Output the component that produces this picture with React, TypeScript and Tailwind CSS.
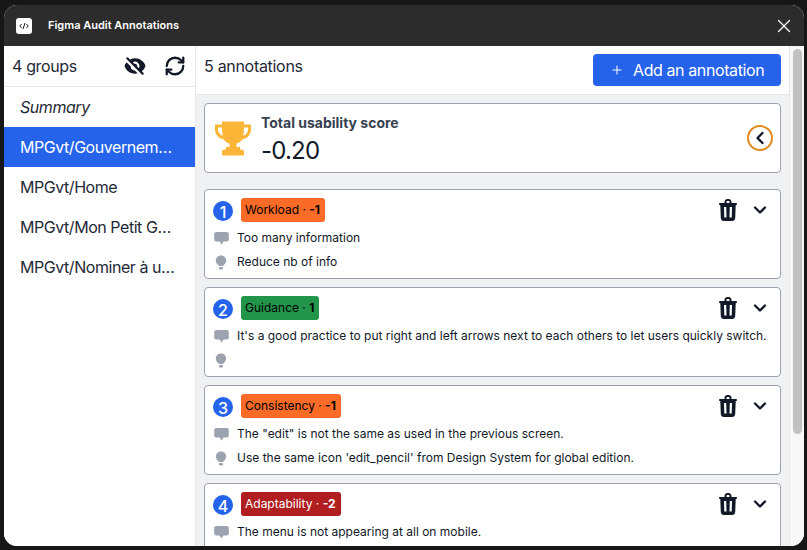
import React from "react";
import { X, Plus, ChevronLeft, ChevronDown, RefreshCw } from "lucide-react";
import { HiEyeOff } from "react-icons/hi";

const Trophy = () => (
  <svg width="36" height="36" viewBox="0 0 36 36" fill="#fbb637">
    <path fillRule="evenodd" d="M7 1.500h22v3h7v5c0 5-3.700 9-8.500 9.800-1.500 2.300-3.500 3.700-6 4.200v3.500h-7v-3.500c-2.500-.5-4.500-1.900-6-4.200C3.700 18.500 0 14.500 0 9.500v-5h7v-3zM3 7.500v2c0 2.800 1.700 5.200 4.900 6.300C7.300 13.500 7 10.500 7 7.500H3zm30 0h-4c0 3-.3 6-.9 8.300 3.200-1.100 4.900-3.500 4.900-6.300v-2z" />
    <path d="M11 27h14v2.500h1.500c1.500 0 2.500 1 2.500 2.500v3.500H7V32c0-1.500 1-2.500 2.500-2.500H11V27z" />
  </svg>
);

const Trash = () => (
  <svg width="18" height="22" viewBox="0 0 18 22" fill="#111827">
    <path fillRule="evenodd" d="M5.500 4V3C5.500 1.200 6.800 0 8.500 0h1c1.700 0 3 1.200 3 3v1h4.500c.6 0 1 .4 1 1.100s-.4 1.100-1 1.100h-.3L16.200 19c-.1 1.700-1.400 3-3.100 3H4.900c-1.700 0-3-1.300-3.100-3L1.300 6.200H1c-.6 0-1-.4-1-1.100S.4 4 1 4h4.500zm2 0h3V3c0-.6-.4-1-1-1h-1c-.6 0-1 .4-1 1v1zM5 8l.3 10.500h2.200L7.200 8H5zm5.800 0-.3 10.500h2.200L13 8h-2.200z" />
  </svg>
);

const Comment = () => (
  <svg width="15" height="13" viewBox="0 0 15 13" fill="#9ca3af">
    <path d="M2.300 0h10.400c1.200 0 2.100.9 2.100 2v5.500c0 1.100-.9 2-2.100 2H9.500L7.500 12.500l-2-3H2.300c-1.200 0-2.100-.9-2.100-2V2C.2.900 1.100 0 2.300 0z" />
  </svg>
);

const Bulb = () => (
  <svg width="14" height="15" viewBox="0 0 14 15" fill="#9ca3af">
    <path d="M7 .5c3 0 5.200 2.200 5.200 5 0 1.900-1 3.200-2.200 4.200-.5.400-.7.800-.7 1.300H4.700c0-.5-.2-.9-.7-1.300C2.800 8.700 1.800 7.400 1.800 5.500c0-2.800 2.200-5 5.200-5z" />
    <rect x="5" y="12" width="4" height="2.500" rx="1" />
  </svg>
);

type Item = { n: number; label: string; score: string; color: string; text: string; comment: string; tip: string };

const items: Item[] = [
  { n: 1, label: "Workload", score: "-1", color: "bg-[#f96b26]", text: "text-black", comment: "Too many information", tip: "Reduce nb of info" },
  { n: 2, label: "Guidance", score: "1", color: "bg-[#22954a]", text: "text-black", comment: "It's a good practice to put right and left arrows next to each others to let users quickly switch.", tip: "" },
  { n: 3, label: "Consistency", score: "-1", color: "bg-[#f96b26]", text: "text-black", comment: 'The "edit" is not the same as used in the previous screen.', tip: "Use the same icon 'edit_pencil' from Design System for global edition." },
  { n: 4, label: "Adaptability", score: "-2", color: "bg-[#b01e20]", text: "text-white", comment: "The menu is not appearing at all on mobile.", tip: "" },
];

const Card = ({ item }: { item: Item }) => (
  <div className="bg-white border border-[#9ca3af] rounded-[4px] h-[90px] shrink-0 pl-2 pr-[10px] pt-2 flex flex-col">
    <div className="flex items-center h-6">
      <div className="w-5 h-5 rounded-full bg-[#2563eb] text-white text-[16px] font-medium leading-[22px] text-center mt-[2px] overflow-hidden">{item.n}</div>
      <div className={`ml-[8px] h-6 rounded-[3px] pl-[4px] pr-[5px] text-[12px] leading-6 ${item.color} ${item.text}`}>
        {item.label} · <span className="font-bold">{item.score}</span>
      </div>
      <div className="ml-auto flex items-center gap-[13px]">
        <Trash />
        <ChevronDown size={20} strokeWidth={2.800} color="#111827" />
      </div>
    </div>
    <div className="flex items-center h-6 mt-[4px] text-[12px] text-[#111827] whitespace-nowrap">
      <span className="w-[16px] mr-[8px] flex justify-center"><Comment /></span>
      {item.comment}
    </div>
    <div className="flex items-center h-6 text-[12px] text-[#111827] whitespace-nowrap">
      <span className="w-[16px] mr-[8px] flex justify-center"><Bulb /></span>
      {item.tip}
    </div>
  </div>
);

export default function App() {
  const groups = ["Summary", "MPGvt/Gouvernem…", "MPGvt/Home", "MPGvt/Mon Petit G…", "MPGvt/Nominer à u…"];
  return (
    <div className="w-[807px] h-[550px] bg-[#171717] pt-[5px] pl-[4px] pr-[3px] pb-[4px] overflow-hidden" style={{ fontFamily: "Inter, 'Liberation Sans', sans-serif" }}>
      <div className="w-full h-full rounded-[13px] overflow-hidden flex flex-col bg-white">
        <div className="h-[41px] shrink-0 bg-[#2c2c2c] flex items-center pl-[12px] pr-[9px]">
          <div className="w-4 h-4 rounded-[3px] bg-white flex items-center justify-center">
            <svg width="10" height="8" viewBox="0 0 10 8" fill="none" stroke="#222" strokeWidth="1">
              <path d="M2.500 2 .8 4l1.700 2M7.500 2l1.700 2-1.700 2M6 1 4 7" />
            </svg>
          </div>
          <span className="ml-[16px] text-white text-[11px] font-semibold">Figma Audit Annotations</span>
          <X size={22} color="#fff" strokeWidth={1.300} className="ml-auto" />
        </div>
        <div className="flex-1 flex min-h-0">
          <div className="w-[192px] shrink-0 border-r border-[#e5e7eb] bg-white">
            <div className="h-[41px] border-b border-[#e5e7eb] flex items-center pl-2 pr-[9px] text-[#1f2937] text-[16px] tracking-[-0.35px]">
              <span>4 groups</span>
              <span className="ml-auto flex items-center gap-[18px]">
                <HiEyeOff size={22} color="#111827" />
                <RefreshCw size={22} strokeWidth={2.500} color="#111827" />
              </span>
            </div>
            {groups.map((g, i) => (
              <div key={g} className={`h-10 px-4 flex items-center whitespace-nowrap text-[16px] tracking-[-0.45px] ${i === 1 ? "bg-[#2563eb] text-white" : "text-[#1f2937]"} ${i === 0 ? "italic" : ""}`}>{g}</div>
            ))}
          </div>
          <div className="flex-1 min-w-0 flex flex-col bg-[#f0f1f3]">
            <div className="h-[49px] shrink-0 bg-white border-b border-[#e5e7eb] flex px-2 pt-2">
              <span className="text-[#1f2937] text-[16px] leading-6 tracking-[-0.3px]">5 annotations</span>
              <button className="ml-auto h-8 w-[188px] rounded-[4px] bg-[#2563eb] text-white text-[16px] tracking-[-0.4px] flex items-center pl-[17px]">
                <Plus size={14} strokeWidth={1.800} />
                <span className="ml-[9px]">Add an annotation</span>
              </button>
            </div>
            <div className="flex-1 min-h-0 overflow-hidden px-2 pt-2 flex flex-col">
              <div className="bg-white border border-[#9ca3af] rounded-[4px] h-[70px] shrink-0 flex items-center pl-[10px] pr-[7px]">
                <Trophy />
                <div className="ml-[10px] mt-[3px]">
                  <div className="text-[14px] leading-5 font-bold text-[#374151]">Total usability score</div>
                  <div className="text-[24px] leading-8 mt-[2px] tracking-[-0.8px] text-[#111827]">-0.20</div>
                </div>
                <div className="ml-auto w-[26px] h-[26px] rounded-full border-2 border-[#e08a1e] flex items-center justify-center">
                  <ChevronLeft size={20} strokeWidth={2.800} color="#111827" />
                </div>
              </div>
              <div className="mt-[16px] flex flex-col gap-[8px]">
                {items.map((it) => <Card key={it.n} item={it} />)}
              </div>
            </div>
          </div>
          <div className="w-[15px] shrink-0 bg-[#f8f8f8] border-l border-[#e8e8e8] pt-[3px] flex justify-center">
            <div className="w-[9px] h-[385px] rounded-full bg-[#c1c1c1]" />
          </div>
        </div>
      </div>
    </div>
  );
}
